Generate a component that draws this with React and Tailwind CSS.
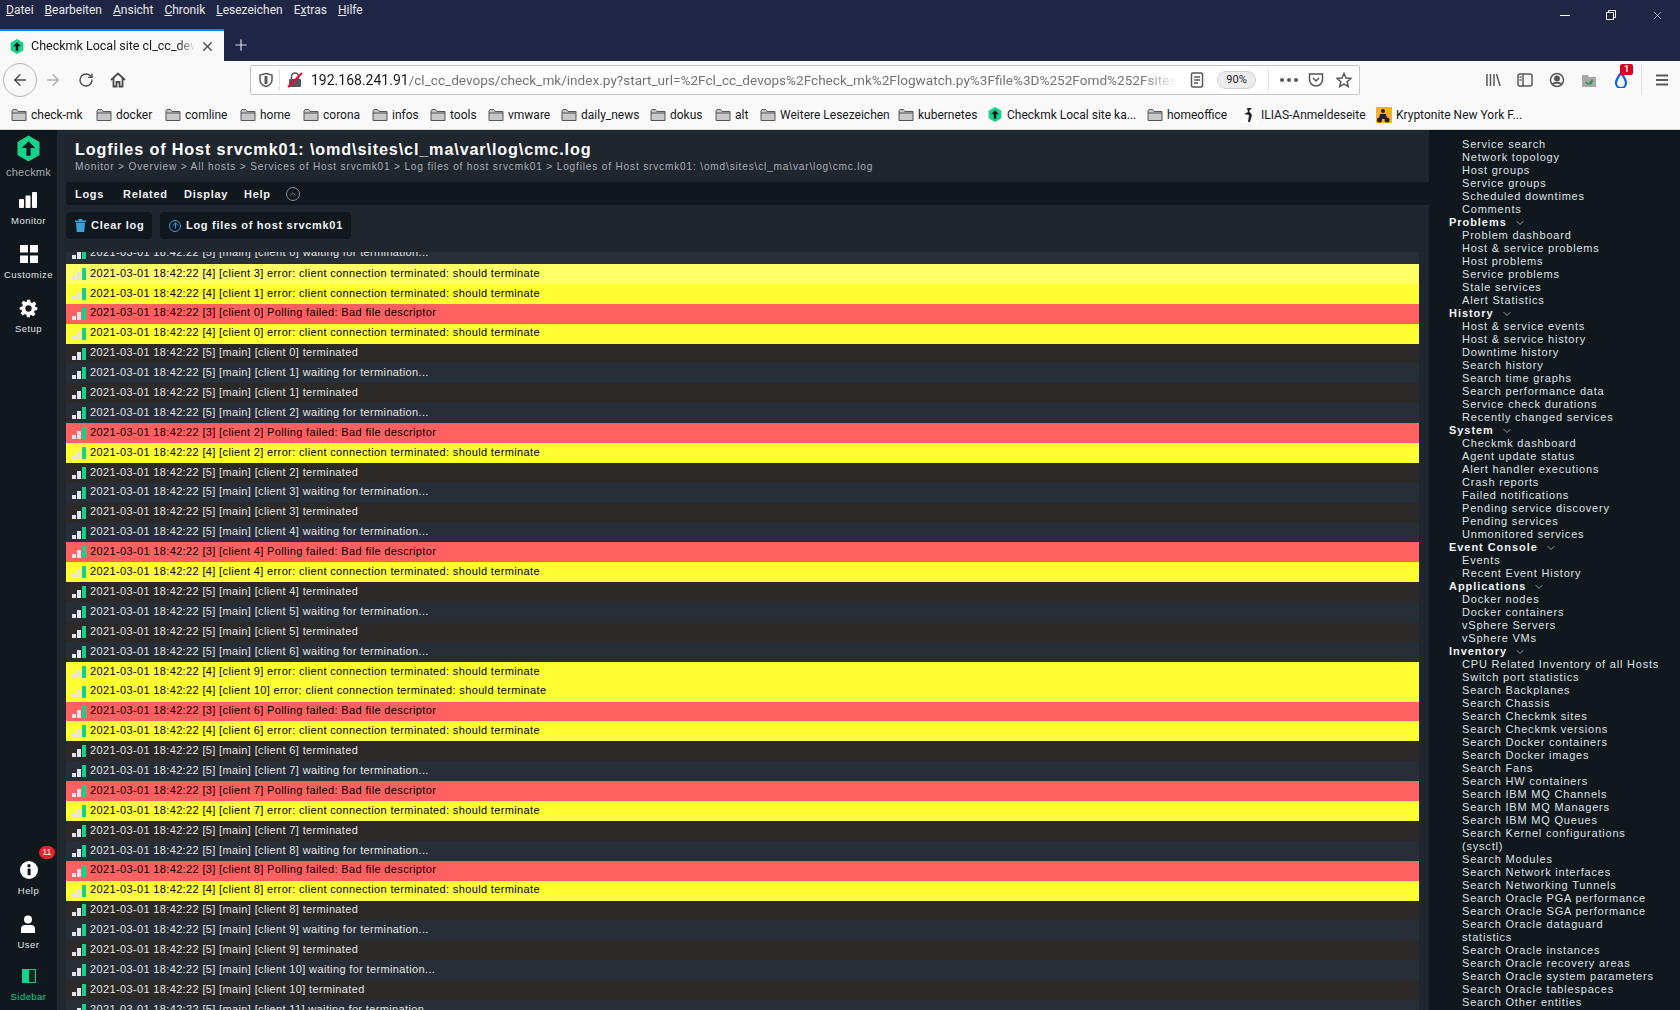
import { ArrowLeft, ArrowRight, RotateCw, ChevronDown, ChevronUp, ArrowUp, X, Plus } from "lucide-react";

const UI = "font-['Roboto',sans-serif]";

const rows = [
  ["y2", "2021-03-01 18:42:22 [4] [client 3] error: client connection terminated: should terminate"],
  ["y", "2021-03-01 18:42:22 [4] [client 1] error: client connection terminated: should terminate"],
  ["r", "2021-03-01 18:42:22 [3] [client 0] Polling failed: Bad file descriptor"],
  ["y", "2021-03-01 18:42:22 [4] [client 0] error: client connection terminated: should terminate"],
  ["a", "2021-03-01 18:42:22 [5] [main] [client 0] terminated"],
  ["b", "2021-03-01 18:42:22 [5] [main] [client 1] waiting for termination..."],
  ["a", "2021-03-01 18:42:22 [5] [main] [client 1] terminated"],
  ["b", "2021-03-01 18:42:22 [5] [main] [client 2] waiting for termination..."],
  ["r", "2021-03-01 18:42:22 [3] [client 2] Polling failed: Bad file descriptor"],
  ["y", "2021-03-01 18:42:22 [4] [client 2] error: client connection terminated: should terminate"],
  ["a", "2021-03-01 18:42:22 [5] [main] [client 2] terminated"],
  ["b", "2021-03-01 18:42:22 [5] [main] [client 3] waiting for termination..."],
  ["a", "2021-03-01 18:42:22 [5] [main] [client 3] terminated"],
  ["b", "2021-03-01 18:42:22 [5] [main] [client 4] waiting for termination..."],
  ["r", "2021-03-01 18:42:22 [3] [client 4] Polling failed: Bad file descriptor"],
  ["y", "2021-03-01 18:42:22 [4] [client 4] error: client connection terminated: should terminate"],
  ["a", "2021-03-01 18:42:22 [5] [main] [client 4] terminated"],
  ["b", "2021-03-01 18:42:22 [5] [main] [client 5] waiting for termination..."],
  ["a", "2021-03-01 18:42:22 [5] [main] [client 5] terminated"],
  ["b", "2021-03-01 18:42:22 [5] [main] [client 6] waiting for termination..."],
  ["y", "2021-03-01 18:42:22 [4] [client 9] error: client connection terminated: should terminate"],
  ["y", "2021-03-01 18:42:22 [4] [client 10] error: client connection terminated: should terminate"],
  ["r", "2021-03-01 18:42:22 [3] [client 6] Polling failed: Bad file descriptor"],
  ["y", "2021-03-01 18:42:22 [4] [client 6] error: client connection terminated: should terminate"],
  ["a", "2021-03-01 18:42:22 [5] [main] [client 6] terminated"],
  ["b", "2021-03-01 18:42:22 [5] [main] [client 7] waiting for termination..."],
  ["r", "2021-03-01 18:42:22 [3] [client 7] Polling failed: Bad file descriptor"],
  ["y", "2021-03-01 18:42:22 [4] [client 7] error: client connection terminated: should terminate"],
  ["a", "2021-03-01 18:42:22 [5] [main] [client 7] terminated"],
  ["b", "2021-03-01 18:42:22 [5] [main] [client 8] waiting for termination..."],
  ["r", "2021-03-01 18:42:22 [3] [client 8] Polling failed: Bad file descriptor"],
  ["y", "2021-03-01 18:42:22 [4] [client 8] error: client connection terminated: should terminate"],
  ["a", "2021-03-01 18:42:22 [5] [main] [client 8] terminated"],
  ["b", "2021-03-01 18:42:22 [5] [main] [client 9] waiting for termination..."],
  ["a", "2021-03-01 18:42:22 [5] [main] [client 9] terminated"],
  ["b", "2021-03-01 18:42:22 [5] [main] [client 10] waiting for termination..."],
  ["a", "2021-03-01 18:42:22 [5] [main] [client 10] terminated"],
  ["b", "2021-03-01 18:42:22 [5] [main] [client 11] waiting for termination..."],
];

const rowStyles = {
  y: "bg-[#ffff33] text-black",
  y2: "bg-[#ffff66] text-black",
  r: "bg-[#ff6060] text-black",
  a: "bg-[#2b2a29] text-[#e6e6e6]",
  b: "bg-[#272e37] text-[#e6e6e6]",
};

const sections = [
  { items: ["Service search", "Network topology", "Host groups", "Service groups", "Scheduled downtimes", "Comments"] },
  { title: "Problems", items: ["Problem dashboard", "Host & service problems", "Host problems", "Service problems", "Stale services", "Alert Statistics"] },
  { title: "History", items: ["Host & service events", "Host & service history", "Downtime history", "Search history", "Search time graphs", "Search performance data", "Service check durations", "Recently changed services"] },
  { title: "System", items: ["Checkmk dashboard", "Agent update status", "Alert handler executions", "Crash reports", "Failed notifications", "Pending service discovery", "Pending services", "Unmonitored services"] },
  { title: "Event Console", items: ["Events", "Recent Event History"] },
  { title: "Applications", items: ["Docker nodes", "Docker containers", "vSphere Servers", "vSphere VMs"] },
  {
    title: "Inventory",
    items: [
      "CPU Related Inventory of all Hosts", "Switch port statistics", "Search Backplanes", "Search Chassis", "Search Checkmk sites",
      "Search Checkmk versions", "Search Docker containers", "Search Docker images", "Search Fans", "Search HW containers",
      "Search IBM MQ Channels", "Search IBM MQ Managers", "Search IBM MQ Queues", "Search Kernel configurations\n(sysctl)",
      "Search Modules", "Search Network interfaces", "Search Networking Tunnels", "Search Oracle PGA performance",
      "Search Oracle SGA performance", "Search Oracle dataguard\nstatistics", "Search Oracle instances", "Search Oracle recovery areas",
      "Search Oracle system parameters", "Search Oracle tablespaces", "Search Other entities",
    ],
  },
];

const bookmarks = [
  ["check-mk", "w-[85px]"], ["docker", "w-[69px]"], ["comline", "w-[75px]"], ["home", "w-[63px]"], ["corona", "w-[69px]"],
  ["infos", "w-[58px]"], ["tools", "w-[58px]"], ["vmware", "w-[73px]"], ["daily_news", "w-[89px]"], ["dokus", "w-[65px]"],
  ["alt", "w-[45px]"], ["Weitere Lesezeichen", "w-[138px]"], ["kubernetes", "w-[90px]"],
];

const Logo = ({ className }) => (
  <svg viewBox="0 0 24 27" className={className}>
    <path d="M12 0 23.5 6.6V20.2L12 27 .5 20.2V6.6Z" fill="#15d389" />
    <path d="M12 6 19 13H14.2V21H9.8V13H5Z" fill="#10171d" />
  </svg>
);

const Folder = () => (
  <svg viewBox="0 0 16 14" className="w-4 h-[14px] shrink-0">
    <path d="M1 3V12.5H15V3.5H7L5.5 1.5H2Z" fill="#c8c8c8" stroke="#55555a" strokeWidth="1" />
    <path d="M1 5H15" stroke="#55555a" strokeWidth="1" />
  </svg>
);

const LevelBars = () => (
  <svg viewBox="0 0 14 12" className="w-[14px] h-3 shrink-0">
    <rect x="0" y="8" width="4" height="4" fill="#e4e4f0" />
    <rect x="5" y="4" width="4" height="8" fill="#e4e4f0" />
    <rect x="10" y="0" width="4" height="12" fill="#13d389" />
  </svg>
);

const NavItem = ({ icon, label, green }) => (
  <div className="relative flex flex-col items-center h-[52px]">
    <div className="h-7 pt-[2px] flex items-center justify-center">{icon}</div>
    <span className={`mt-[2px] text-[9.5px] leading-3 tracking-[0.45px] ${green ? "text-[#15d389]" : "text-[#dfe3e6]"}`}>{label}</span>
  </div>
);

const LeftNav = () => (
  <nav className="w-[57px] shrink-0 bg-[#10171d] flex flex-col justify-between">
    <div className="flex flex-col items-center">
      <div className="flex flex-col items-center pt-[5px] h-[55px]">
        <Logo className="w-[23px] h-[27px]" />
        <span className="mt-[4px] text-[11px] leading-3 tracking-[0.2px] text-[#a5abb0]">checkmk</span>
      </div>
      <NavItem label="Monitor" icon={
        <svg viewBox="0 0 18 16" className="w-[18px] h-4"><rect x="0" y="7" width="5" height="9" rx="1" fill="#fff" /><rect x="6.5" y="3.5" width="5" height="12.5" rx="1" fill="#fff" /><rect x="13" y="0" width="5" height="16" rx="1" fill="#fff" /></svg>
      } />
      <div className="h-[2px]" />
      <NavItem label="Customize" icon={
        <svg viewBox="0 0 18 18" className="w-[18px] h-[18px]"><rect width="8" height="7.5" fill="#fff" /><rect x="10" width="8" height="7.5" fill="#fff" /><rect y="10.5" width="8" height="7.5" fill="#fff" /><rect x="10" y="10.5" width="8" height="7.5" fill="#fff" /></svg>
      } />
      <div className="h-[2px]" />
      <NavItem label="Setup" icon={
        <svg viewBox="0 0 24 24" className="w-[19px] h-[19px]" fill="#fff"><path fillRule="evenodd" d="M10 1h4l.6 3.1 1.9.8 2.6-1.8 2.8 2.8-1.8 2.6.8 1.9L23 10v4l-3.1.6-.8 1.9 1.8 2.6-2.8 2.8-2.6-1.8-1.9.8L14 23h-4l-.6-3.1-1.9-.8-2.6 1.8-2.8-2.8 1.8-2.6-.8-1.9L1 14v-4l3.1-.6.8-1.9-1.8-2.6 2.8-2.8 2.6 1.8 1.9-.8ZM12 8a4 4 0 1 0 0 8 4 4 0 0 0 0-8Z" /></svg>
      } />
    </div>
    <div className="flex flex-col items-center -mb-[3px]">
      <div className="relative">
        <NavItem label="Help" icon={
          <svg viewBox="0 0 18 18" className="w-[18px] h-[18px]"><circle cx="9" cy="9" r="9" fill="#fff" /><rect x="7.6" y="7.6" width="3" height="6.6" fill="#10171d" /><circle cx="9" cy="4.8" r="1.7" fill="#10171d" /></svg>
        } />
        <span className="absolute -top-[9px] left-[21px] w-4 h-[13px] rounded-full bg-[#e3242b] text-white text-[9px] leading-[13px] text-center">11</span>
      </div>
      <div className="h-[2px]" />
      <NavItem label="User" icon={
        <svg viewBox="0 0 16 18" className="w-4 h-[18px]"><circle cx="8" cy="4.5" r="4" fill="#fff" /><path d="M1 18V13.5C1 11 3 10 5 10H11C13 10 15 11 15 13.5V18Z" fill="#fff" /></svg>
      } />
      <NavItem green label="Sidebar" icon={
        <svg viewBox="0 0 14 14" className="w-[14px] h-[14px]"><rect x="0.5" y="0.5" width="13" height="13" fill="#0f2a22" stroke="#15d389" /><rect x="0" y="0" width="7" height="14" fill="#15d389" /></svg>
      } />
    </div>
  </nav>
);

const ToolbarIcon = ({ children, className = "" }) => (
  <svg viewBox="0 0 16 16" className={`w-4 h-4 shrink-0 ${className}`} fill="none" stroke="#58585c" strokeWidth="1.5">{children}</svg>
);

const LogRow = ({ kind, text }) => (
  <div className={`h-[19.9px] flex items-center pl-[6px] pb-[2px] gap-[4px] text-[11px] tracking-[0.36px] whitespace-nowrap ${rowStyles[kind]}`}>
    <span className="pt-[2px] flex"><LevelBars /></span>
    <span>{text}</span>
  </div>
);

const BrowserChrome = () => (
  <div className={`shrink-0 ${UI}`}>
    <div className="h-[61px] bg-[#1f2544] relative">
      <div className="h-[20px] flex items-center pl-[6px] gap-[11px] text-[12px] text-[#e8e9ee]">
        <span><u>D</u>atei</span>
        <span><u>B</u>earbeiten</span>
        <span><u>A</u>nsicht</span>
        <span><u>C</u>hronik</span>
        <span><u>L</u>esezeichen</span>
        <span>E<u>x</u>tras</span>
        <span><u>H</u>ilfe</span>
      </div>
      <div className="absolute left-0 bottom-0 flex items-center">
        <div className="w-[224px] h-[32px] bg-[#f9f9fa] border-t-2 border-[#0a84ff] flex items-center pl-[10px] pr-[9px]">
          <Logo className="w-[14px] h-[15px] shrink-0" />
          <span className="ml-[7px] w-[164px] overflow-hidden whitespace-nowrap text-[12.5px] text-[#18181a] [mask-image:linear-gradient(90deg,#000_90%,transparent)]">Checkmk Local site cl_cc_devops</span>
          <X className="ml-auto w-[15px] h-[15px] text-[#4a4a4f]" strokeWidth={2.2} />
        </div>
        <Plus className="ml-[8px] w-[18px] h-[18px] text-[#d8d9e0]" strokeWidth={1.6} />
      </div>
      <div className="absolute right-0 top-0 h-[30px] flex items-center text-white">
        <span className="w-[46px] flex justify-center"><span className="w-[10px] h-px bg-white" /></span>
        <span className="w-[46px] flex justify-center">
          <svg viewBox="0 0 10 10" className="w-[10px] h-[10px]" fill="none" stroke="#fff"><path d="M.5 2.5H7.5V9.5H.5ZM2.5 2.5V.5H9.5V7.5H7.5" /></svg>
        </span>
        <span className="w-[46px] flex justify-center"><X className="w-[13px] h-[13px]" strokeWidth={1} /></span>
      </div>
    </div>

    <div className="h-[36px] pt-[2px] bg-[#f9f9fa] flex items-center">
      <div className="ml-[3px] w-[34px] h-[34px] rounded-full border border-[#b5b5b8] flex items-center justify-center shrink-0">
        <ArrowLeft className="w-[18px] h-[18px] text-[#4a4a4f]" strokeWidth={1.8} />
      </div>
      <ArrowRight className="ml-[7px] w-[18px] h-[18px] text-[#b0b0b3]" strokeWidth={1.8} />
      <RotateCw className="ml-[16px] w-4 h-4 text-[#4a4a4f]" strokeWidth={2} />
      <svg viewBox="0 0 16 16" className="ml-[16px] w-4 h-4" fill="none" stroke="#4a4a4f" strokeWidth="1.8"><path d="M1 8 8 1.5 15 8M3.5 6.5V14.5H6.5V10H9.5V14.5H12.5V6.5" /></svg>

      <div className="ml-[124px] w-[1110px] h-[30px] bg-white border border-[#c6c6c8] rounded-[2px] flex items-center shrink-0">
        <ToolbarIcon className="ml-[7px]"><path d="M8 1.5 14 3V8C14 11 11 13.5 8 14.5 5 13.5 2 11 2 8V3Z" /><path d="M8 4V12" strokeWidth="3" /></ToolbarIcon>
        <span className="ml-[5px] w-px h-[22px] bg-[#e0e0e2]" />
        <svg viewBox="0 0 16 16" className="ml-[7px] w-4 h-4 shrink-0"><rect x="2" y="7" width="12" height="8" rx="1" fill="#55555a" /><path d="M4.5 7V4.5A3.5 3.5 0 0 1 11.5 4.5V7" fill="none" stroke="#55555a" strokeWidth="1.6" /><path d="M1 15 15 1" stroke="#ff0039" strokeWidth="2" /></svg>
        <span className="ml-[8px] w-[866px] overflow-hidden whitespace-nowrap text-[13.6px] text-[#737373] [mask-image:linear-gradient(90deg,#000_96%,transparent)]">
          <span className="text-[14px] text-[#18181a]">192.168.241.91</span>/cl_cc_devops/check_mk/index.py?start_url=%2Fcl_cc_devops%2Fcheck_mk%2Flogwatch.py%3Ffile%3D%252Fomd%252Fsites%252Fcl_ma
        </span>
        <ToolbarIcon className="ml-[12px]"><rect x="2.5" y="1" width="11" height="14" rx="1.5" /><path d="M5 5H11M5 8H11M5 11H9" strokeWidth="1.3" /></ToolbarIcon>
        <span className="ml-[12px] w-[39px] h-[18px] rounded-full bg-[#ededf0] border border-[#d0d0d3] text-[11px] leading-[16px] text-center text-[#18181a]">90%</span>
        <span className="ml-[12px] w-px h-[22px] bg-[#e0e0e2]" />
        <span className="ml-[11px] flex gap-[3px] w-[18px]">
          <i className="w-[4px] h-[4px] rounded-full bg-[#58585c]" /><i className="w-[4px] h-[4px] rounded-full bg-[#58585c]" /><i className="w-[4px] h-[4px] rounded-full bg-[#58585c]" />
        </span>
        <ToolbarIcon className="ml-[10px]"><path d="M1.5 2H14.5V7.5A6.5 6.5 0 0 1 1.5 7.5Z" /><path d="M5 6 8 9 11 6" /></ToolbarIcon>
        <ToolbarIcon className="ml-[12px]"><path d="M8 1.5 10 6 14.8 6.5 11.2 9.7 12.2 14.5 8 12 3.8 14.5 4.8 9.7 1.2 6.5 6 6Z" /></ToolbarIcon>
      </div>

      <ToolbarIcon className="ml-[125px]"><path d="M2 2V14M5.5 2V14M9 2V14M11.5 2 15 14" /></ToolbarIcon>
      <ToolbarIcon className="ml-[16px]"><rect x="1" y="2" width="14" height="12" rx="2" /><path d="M6 2V14M2.5 5H4.5M2.5 8H4.5" /></ToolbarIcon>
      <ToolbarIcon className="ml-[16px]"><circle cx="8" cy="8" r="6.5" /><circle cx="8" cy="6.5" r="2.2" fill="#58585c" /><path d="M3.5 12.5C5 10 11 10 12.5 12.5" strokeWidth="2" /></ToolbarIcon>
      <svg viewBox="0 0 16 16" className="ml-[16px] w-4 h-4 shrink-0"><path d="M1 3H7L8 5H15V15H1Z" fill="#a8a8ab" /><path d="M5 10A3.2 3.2 0 0 0 11 10M11 10V7.5M11 10H8.5" fill="none" stroke="#2e8b3d" strokeWidth="1.5" /></svg>
      <div className="relative ml-[16px] w-4 h-4 shrink-0">
        <svg viewBox="0 0 16 16" className="w-4 h-4"><path d="M8 1C8 1 3 7.5 3 11A5 5 0 0 0 13 11C13 7.5 8 1 8 1Z" fill="none" stroke="#0a60e0" strokeWidth="2.2" /></svg>
        <span className="absolute -top-[8px] left-[7px] w-[13px] h-[11px] rounded-[2px] bg-[#d70022] text-white font-bold text-[9px] leading-[11px] text-center">1</span>
      </div>
      <span className="ml-[12px] w-px h-[30px] bg-[#e0e0e2]" />
      <ToolbarIcon className="ml-[12px]"><path d="M2 3.5H14M2 8H14M2 12.5H14" strokeWidth="1.8" /></ToolbarIcon>
    </div>

    <div className="h-[33px] pt-[3px] bg-[#f9f9fa] border-b border-[#d7d7db] flex items-center pl-[11px] text-[12px] whitespace-nowrap text-[#18181a]">
      {bookmarks.map(([name, w]) => (
        <div key={name} className={`flex items-center gap-[4px] shrink-0 ${w}`}>
          <Folder />
          <span>{name}</span>
        </div>
      ))}
      <div className="flex items-center gap-[5px] shrink-0 w-[159px]">
        <Logo className="w-[14px] h-[15px] shrink-0" />
        <span>Checkmk Local site ka...</span>
      </div>
      <div className="flex items-center gap-[4px] shrink-0 w-[94px]"><Folder /><span>homeoffice</span></div>
      <div className="flex items-center gap-[4px] shrink-0 w-[135px]">
        <svg viewBox="0 0 16 16" className="w-4 h-4 shrink-0"><rect width="16" height="16" fill="#fff" /><path d="M6 1H11L8 4 11 8 9 15H7L8 8 3 7 7 5Z" fill="#222" /></svg>
        <span>ILIAS-Anmeldeseite</span>
      </div>
      <div className="flex items-center gap-[4px] shrink-0">
        <svg viewBox="0 0 16 16" className="w-4 h-4 shrink-0"><rect width="16" height="16" fill="#f5b21a" /><circle cx="7" cy="4" r="2" fill="#222" /><path d="M4 7H10L11 12H3Z" fill="#222" /><circle cx="3.5" cy="13" r="2.5" fill="#222" /><circle cx="11" cy="13" r="2.5" fill="#222" /></svg>
        <span>Kryptonite New York F...</span>
      </div>
    </div>
  </div>
);

export default function App() {
  return (
    <div className="h-screen w-full overflow-hidden flex flex-col bg-[#10171d] font-['Liberation_Sans',Arial,sans-serif]">
      <BrowserChrome />
      <div className="flex-1 flex min-h-0">
        <LeftNav />
        <main className="w-[1372px] shrink-0 bg-[#1f262e] flex flex-col min-h-0">
          <div className="h-[52px] pl-[18px] pt-[10px] shrink-0">
            <h1 className="text-[16.2px] leading-[19px] font-bold tracking-[0.87px] text-white whitespace-nowrap">Logfiles of Host srvcmk01: \omd\sites\cl_ma\var\log\cmc.log</h1>
            <p className="text-[10.1px] leading-3 tracking-[0.83px] text-[#a9aeb3] mt-[2px] whitespace-nowrap">Monitor &gt; Overview &gt; All hosts &gt; Services of Host srvcmk01 &gt; Log files of host srvcmk01 &gt; Logfiles of Host srvcmk01: \omd\sites\cl_ma\var\log\cmc.log</p>
          </div>
          <div className="ml-[9px] h-[23px] pt-[1px] shrink-0 bg-[#10171d] rounded-l-[4px] flex items-center pl-[9px] text-[11px] font-bold tracking-[0.7px] text-[#f2f3f4]">
            <span className="w-[48px]">Logs</span>
            <span className="w-[61px]">Related</span>
            <span className="w-[60px]">Display</span>
            <span className="w-[42px]">Help</span>
            <span className="w-[14px] h-[14px] rounded-full border border-[#8b9095] flex items-center justify-center">
              <ChevronUp className="w-[10px] h-[10px] text-[#8b9095]" />
            </span>
          </div>
          <div className="ml-[9px] mt-[7px] flex gap-2 shrink-0">
            <div className="h-[27px] w-[86px] rounded-[4px] bg-[#10171d] flex items-center pl-[9px] gap-[5px] text-[11px] font-bold tracking-[0.7px] text-[#f2f3f4]">
              <svg viewBox="0 0 11 13" className="w-[11px] h-[13px] shrink-0"><path d="M0 1.5H11V3H0ZM3.5 0H7.5V1.5H3.5ZM1 3.5H10L9.3 13H1.7Z" fill="#3a9fdc" /></svg>
              Clear log
            </div>
            <div className="h-[27px] w-[191px] rounded-[4px] bg-[#10171d] flex items-center pl-[9px] gap-[5px] text-[11px] font-bold tracking-[0.7px] text-[#f2f3f4]">
              <span className="w-[12px] h-[12px] rounded-full border border-[#3a9fdc] flex items-center justify-center shrink-0">
                <ArrowUp className="w-[9px] h-[9px] text-[#3a9fdc]" strokeWidth={2.5} />
              </span>
              Log files of host srvcmk01
            </div>
          </div>
          <div className="ml-[9px] mt-[13px] mr-[10px] flex-1 overflow-hidden min-h-0">
            <div className="h-[12px] overflow-hidden bg-[#272e37]">
              <div className="-mt-[9px]">
                <LogRow kind="b" text="2021-03-01 18:42:22 [5] [main] [client 0] waiting for termination..." />
              </div>
            </div>
            {rows.map(([kind, text], i) => (
              <LogRow key={i} kind={kind} text={text} />
            ))}
          </div>
        </main>
        <aside className="flex-1 bg-[#10171d] overflow-hidden pl-[20px] pr-[8px] pt-[8px]">
          {sections.map((s, i) => (
            <div key={i}>
              {s.title && (
                <div className="flex items-center h-[13px] text-[11px] leading-[13px] font-bold tracking-[0.95px] text-[#f2f3f4]">
                  {s.title}
                  <ChevronDown className="ml-[7px] w-[12px] h-[12px] text-[#9aa0a5]" />
                </div>
              )}
              <ul className="pl-[13px]">
                {s.items.map((item) => (
                  <li key={item} className="text-[11px] leading-[13px] tracking-[0.8px] whitespace-pre-line text-[#dfe3e6]">{item}</li>
                ))}
              </ul>
            </div>
          ))}
        </aside>
      </div>
    </div>
  );
}
